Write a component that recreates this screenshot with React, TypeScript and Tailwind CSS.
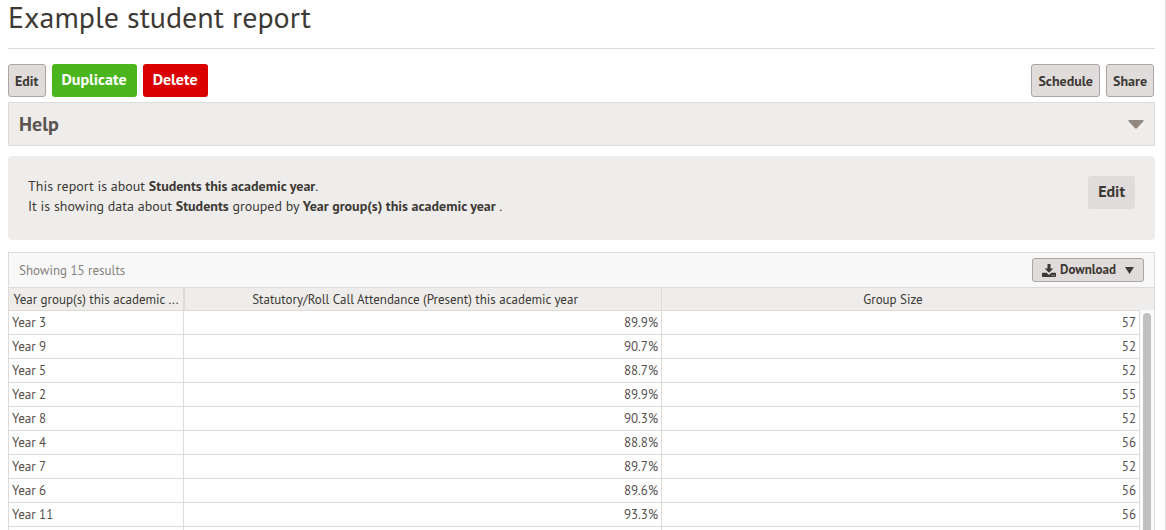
import React from "react";

interface ReportRow {
  yearGroup: string;
  attendance: string;
  size: string;
}

const rows: ReportRow[] = [
  { yearGroup: "Year 3", attendance: "89.9%", size: "57" },
  { yearGroup: "Year 9", attendance: "90.7%", size: "52" },
  { yearGroup: "Year 5", attendance: "88.7%", size: "52" },
  { yearGroup: "Year 2", attendance: "89.9%", size: "55" },
  { yearGroup: "Year 8", attendance: "90.3%", size: "52" },
  { yearGroup: "Year 4", attendance: "88.8%", size: "56" },
  { yearGroup: "Year 7", attendance: "89.7%", size: "52" },
  { yearGroup: "Year 6", attendance: "89.6%", size: "56" },
  { yearGroup: "Year 11", attendance: "93.3%", size: "56" },
  { yearGroup: "", attendance: "", size: "" },
];

const smallButton =
  "h-[33px] px-1.5 pt-0.5 rounded-[3px] border border-[#aca5a3] bg-[#e0dcdb] text-[14px] font-bold text-[#3d3935]";
const bigButton = "h-[33px] px-2.5 pb-1 rounded-[3px] text-[16px] leading-5 font-bold";
const headCell =
  "h-[23px] border-b border-[#dedbdb] bg-[#eeedeb] pt-0.5 pb-0 text-center font-normal whitespace-nowrap text-[#3d3935]";
const bodyCell = "h-6 border-r border-b border-[#dedbdb] px-[3px] py-0";

const DownloadIcon = () => (
  <svg className="h-[13px] w-[14px]" viewBox="0 0 14 13" fill="currentColor" aria-hidden="true">
    <path d="M5.500 0h3v4.500h2.800L7 8.800 2.700 4.500h2.800z" />
    <path d="M.7 8.700h3.900L7 10.900l2.400-2.200h3.900q.7 0 .7.700v2.900q0 .7-.7.700H.7q-.7 0-.7-.7V9.400q0-.7.7-.7zM9.700 11.100v.8h.8v-.8zm2 0v.8h.8v-.8z" fillRule="evenodd" />
  </svg>
);

export default function App() {
  return (
    <main className="h-screen overflow-hidden border-r border-[#dedbdb] bg-white pr-2.5 pl-2 font-['PT_Sans','Noto_Sans',sans-serif] text-[13px] text-[#56504d]">
      <h1 className="h-[49px] border-b border-[#dedbdb] text-[30px] leading-[34px] text-[#3d3935]">
        Example student report
      </h1>

      {/* Report actions */}
      <div className="mt-[15px] flex justify-between">
        <div className="flex gap-1.5">
          <button className={smallButton}>Edit</button>
          <button className={`${bigButton} bg-[#4bb51e] text-white`}>Duplicate</button>
          <button className={`${bigButton} bg-[#db0000] text-white`}>Delete</button>
        </div>
        <div className="flex gap-1.5 pr-px">
          <button className={smallButton}>Schedule</button>
          <button className={smallButton}>Share</button>
        </div>
      </div>

      <button className="mt-[5px] flex h-11 w-full items-center justify-between border border-[#dedbdb] bg-[#eeedeb] px-2.5 text-[20px] font-bold text-[#5c5450]">
        Help
        <svg className="h-[9px] w-4" viewBox="0 0 16 9" fill="#8f8883" aria-hidden="true">
          <path d="M1 0h14q1 0 .6.9L9 8.2Q8 9 7 8.2L.4.9Q0 0 1 0z" />
        </svg>
      </button>

      {/* Report summary */}
      <section className="mt-2.5 flex items-start justify-between rounded-[4px] bg-[#eeedeb] p-5 text-[14px] leading-5 text-[#3d3935]">
        <div className="pb-1">
          <p>
            This report is about <b>Students this academic year</b>.
          </p>
          <p>
            It is showing data about <b>Students</b> grouped by <b>Year group(s) this academic year</b> .
          </p>
        </div>
        <button className={`${bigButton} bg-[#e0dcdb]`}>Edit</button>
      </section>

      {/* Results */}
      <section className="mt-3 border border-[#dedbdb]">
        <div className="flex h-[35px] items-center justify-between border-b border-[#dedbdb] bg-[#f8f8f8] px-2.5">
          <span className="pt-0.5 text-[#85807c]">Showing 15 results</span>
          <button className="flex h-6 items-center rounded-[3px] border border-[#aca5a3] bg-[#e0dcdb] px-[9px] font-bold text-[#3d3935]">
            <DownloadIcon />
            <span className="pr-[9px] pl-1">Download</span>
            <svg className="h-[7px] w-[9px]" viewBox="0 0 9 7" fill="currentColor" aria-hidden="true">
              <path d="M0 0h9L4.500 7z" />
            </svg>
          </button>
        </div>
        <div className="flex">
          <table className="w-full min-w-0 table-fixed border-separate border-spacing-0">
            <thead>
              <tr>
                <th className={`${headCell} w-[175px] border-r px-1`} title="Year group(s) this academic year">
                  Year group(s) this academic ...
                </th>
                <th className={`${headCell} border-x pr-4`}>
                  Statutory/Roll Call Attendance (Present) this academic year
                </th>
                <th className={`${headCell} pr-4`}>Group Size</th>
              </tr>
            </thead>
            <tbody>
              {rows.map((row, i) => (
                <tr key={i}>
                  <td className={bodyCell}>{row.yearGroup}</td>
                  <td className={`${bodyCell} text-right`}>{row.attendance}</td>
                  <td className={`${bodyCell} text-right`}>{row.size}</td>
                </tr>
              ))}
            </tbody>
          </table>
          {/* Scroll track */}
          <div className="flex w-3.5 shrink-0 flex-col items-center bg-[#fafafa]">
            <div className="h-[22px] w-full bg-[#eeedeb]" />
            <div className="mt-[3px] w-2 flex-1 rounded-full bg-[#c1c1c1]" />
          </div>
        </div>
      </section>
    </main>
  );
}
